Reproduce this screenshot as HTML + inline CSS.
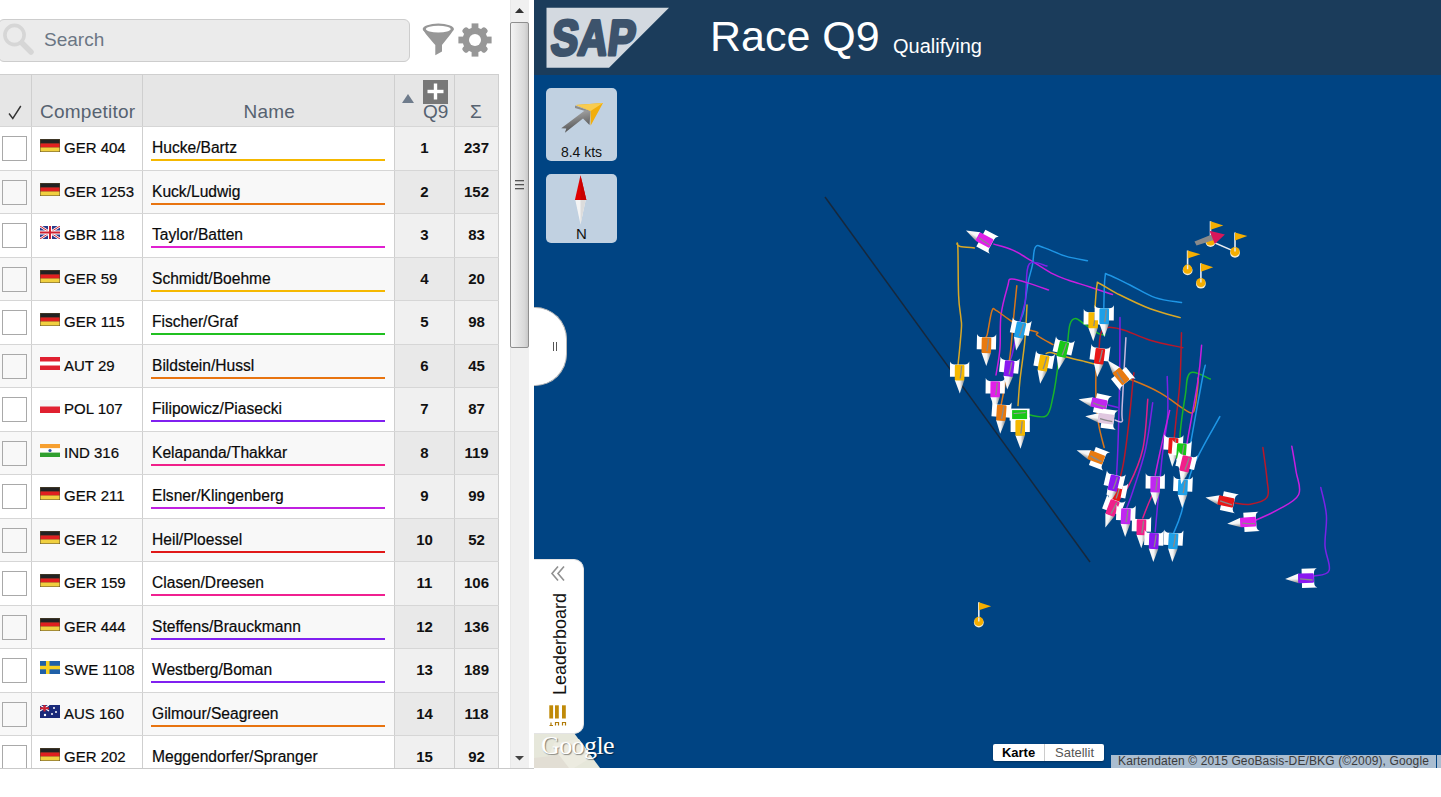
<!DOCTYPE html>
<html><head><meta charset="utf-8">
<style>
*{box-sizing:border-box;margin:0;padding:0}
html,body{width:1441px;height:797px;overflow:hidden;background:#fff;font-family:"Liberation Sans",sans-serif;position:relative}
.abs{position:absolute}
#search{left:-2px;top:19px;width:412px;height:43px;background:#ebebeb;border:1px solid #cdcdcd;border-radius:6px}
#search .ph{position:absolute;left:45px;top:9px;font-size:19px;color:#6b7684}
#tbl{position:absolute;left:0;top:74px;width:499px}
.hdr{position:absolute;left:0;top:0;width:499px;height:53px;background:#e6e6e6;border-top:1px solid #cfcfcf;border-bottom:1px solid #cfcfcf}
.vl{position:absolute;width:1px;background:#cfcfcf}
.row{position:absolute;left:0;width:499px;height:44px}
.hl{position:absolute;left:0;top:0;width:499px;height:1px;background:#d6d6d6}
.row.odd{background:#fff}
.row.even{background:#f8f8f8}
.row .sc{position:absolute;left:395px;top:0;width:104px;height:100%;background:#f0f0f0}
.row.even .sc{background:#e9e9e9}
.cb{position:absolute;left:2px;top:10px;width:25px;height:25px;border:1px solid #a9a9a9;background:#fff}
.row.even .cb{background:#f8f8f8}
.flag{position:absolute;left:40px;top:13px;width:20px;height:13px}
.cid{position:absolute;left:64px;top:12.5px;font-size:15px;color:#0a0a0a;-webkit-text-stroke:0.2px #0a0a0a}
.nm{position:absolute;left:152px;top:13.3px;font-size:15.6px;color:#0a0a0a;-webkit-text-stroke:0.2px #0a0a0a}
.ul{position:absolute;left:151px;top:33px;width:234px;height:2px}
.q{position:absolute;left:395px;width:59px;top:13px;text-align:center;font-size:15px;font-weight:bold;color:#111}
.s{position:absolute;left:455px;width:43px;top:13px;text-align:center;font-size:15px;font-weight:bold;color:#111}
.h{position:absolute;font-size:19px;color:#566270;top:26px;letter-spacing:0.25px}
#sb{position:absolute;left:510px;top:0;width:19px;height:768px;background:#f0f0f0;border-left:1px solid #e8e8e8}
#thumb{position:absolute;left:510px;top:22px;width:19px;height:326px;border:1px solid #8f8f8f;border-radius:2px;background:linear-gradient(to right,#f4f4f4 0%,#e6e6e6 40%,#d8d8d8 80%,#c8c8c8 100%)}
#bottomline{position:absolute;left:0;top:768px;width:534px;height:1px;background:#c9c9c9}
#map{position:absolute;left:534px;top:0;width:907px;height:768px;background:#004483;overflow:hidden}
#head{position:absolute;left:0;top:0;width:907px;height:75px;background:#1b3c5b}
</style></head><body>

<div id="search" class="abs">
  <svg class="abs" style="left:0;top:0" width="40" height="43" viewBox="0 0 40 43"><circle cx="15.5" cy="15" r="9.6" fill="none" stroke="#d6d6d6" stroke-width="3.6"/><line x1="23" y1="23" x2="32" y2="32" stroke="#d6d6d6" stroke-width="5.5" stroke-linecap="round"/></svg>
  <div class="ph">Search</div>
</div>
<!-- filter -->
<svg class="abs" style="left:420px;top:20px" width="38" height="40" viewBox="0 0 38 40">
  <ellipse cx="18.3" cy="8.9" rx="15.6" ry="5.3" fill="#979797"/>
  <path d="M2.9,9.5 C6,15 12,21 15.3,25 L15.3,35.3 L22,31.4 L22,25 C25,21 30.5,15 33.7,9.5 Z" fill="#979797"/>
  <ellipse cx="18.3" cy="9.1" rx="12.4" ry="3.4" fill="#fff"/>
</svg>
<!-- gear -->
<svg class="abs" style="left:456.5px;top:22.2px" width="36" height="36" viewBox="-18 -18 36 36">
  <g fill="#979797">
   <circle r="12.5"/>
   <rect x="-3.4" y="-16.6" width="6.8" height="33.2"/>
   <rect x="-16.6" y="-3.4" width="33.2" height="6.8"/>
   <rect x="-3.4" y="-16" width="6.8" height="32" rx="2.5" transform="rotate(45)"/>
   <rect x="-16" y="-3.4" width="32" height="6.8" rx="2.5" transform="rotate(45)"/>
  </g>
  <circle r="6" fill="#fff"/>
</svg>

<div id="tbl">
  <div class="hdr">
    <div class="vl" style="left:31px;top:0;height:52px"></div><div class="vl" style="left:142px;top:0;height:52px"></div><div class="vl" style="left:394px;top:0;height:52px"></div><div class="vl" style="left:454px;top:0;height:52px"></div><div class="vl" style="left:498px;top:0;height:52px"></div>
    <svg class="abs" style="left:8px;top:30px" width="14" height="15" viewBox="0 0 14 15"><path d="M1,8.5 L4.8,13.5 L12.8,1" fill="none" stroke="#333" stroke-width="1.4"/></svg>
    <div class="h" style="left:40px">Competitor</div>
    <div class="h" style="left:243.5px">Name</div>
    <div class="abs" style="left:402px;top:19px;width:0;height:0;border-left:6.5px solid transparent;border-right:6.5px solid transparent;border-bottom:9px solid #6f7c8c"></div>
    <div class="abs" style="left:423px;top:5px;width:25px;height:23.5px;background:#777"><svg width="25" height="24"><rect x="4.5" y="9.8" width="16" height="3.4" fill="#fff"/><rect x="10.8" y="3.5" width="3.4" height="16" fill="#fff"/></svg></div>
    <div class="h" style="left:423px;top:25.5px;letter-spacing:0">Q9</div>
    <div class="h" style="left:470px">&Sigma;</div>
  </div>
  </div>
<div class="abs" style="left:0;top:0;width:500px;height:768px;overflow:hidden"><div class="row odd" style="top:126px;height:44px"><div class="sc"></div><div class="cb"></div><svg class="flag" viewBox="0 0 20 13"><rect width="20" height="13" fill="#5a4a2a"/><rect x="0.5" y="0.5" width="19" height="4" fill="#222"/><rect x="0.5" y="4.5" width="19" height="4" fill="#e02020"/><rect x="0.5" y="8.5" width="19" height="4" fill="#f0d040"/></svg><div class="cid">GER 404</div><div class="nm">Hucke/Bartz</div><div class="ul" style="background:#f5b800"></div><div class="q">1</div><div class="s">237</div><div class="vl" style="left:31px;top:0;height:100%"></div><div class="vl" style="left:142px;top:0;height:100%"></div><div class="vl" style="left:394px;top:0;height:100%"></div><div class="vl" style="left:454px;top:0;height:100%"></div><div class="vl" style="left:498px;top:0;height:100%"></div><div class="hl"></div></div>
<div class="row even" style="top:170px;height:43px"><div class="sc"></div><div class="cb"></div><svg class="flag" viewBox="0 0 20 13"><rect width="20" height="13" fill="#5a4a2a"/><rect x="0.5" y="0.5" width="19" height="4" fill="#222"/><rect x="0.5" y="4.5" width="19" height="4" fill="#e02020"/><rect x="0.5" y="8.5" width="19" height="4" fill="#f0d040"/></svg><div class="cid">GER 1253</div><div class="nm">Kuck/Ludwig</div><div class="ul" style="background:#e87410"></div><div class="q">2</div><div class="s">152</div><div class="vl" style="left:31px;top:0;height:100%"></div><div class="vl" style="left:142px;top:0;height:100%"></div><div class="vl" style="left:394px;top:0;height:100%"></div><div class="vl" style="left:454px;top:0;height:100%"></div><div class="vl" style="left:498px;top:0;height:100%"></div><div class="hl"></div></div>
<div class="row odd" style="top:213px;height:44px"><div class="sc"></div><div class="cb"></div><svg class="flag" viewBox="0 0 20 13"><rect width="20" height="13" fill="#2a3a8a"/><path d="M0 0L20 13M20 0L0 13" stroke="#fff" stroke-width="2.5"/><path d="M0 0L20 13M20 0L0 13" stroke="#d02030" stroke-width="1"/><rect x="8" y="0" width="4" height="13" fill="#fff"/><rect x="0" y="4.5" width="20" height="4" fill="#fff"/><rect x="9" y="0" width="2" height="13" fill="#d02030"/><rect x="0" y="5.5" width="20" height="2" fill="#d02030"/></svg><div class="cid">GBR 118</div><div class="nm">Taylor/Batten</div><div class="ul" style="background:#e020d0"></div><div class="q">3</div><div class="s">83</div><div class="vl" style="left:31px;top:0;height:100%"></div><div class="vl" style="left:142px;top:0;height:100%"></div><div class="vl" style="left:394px;top:0;height:100%"></div><div class="vl" style="left:454px;top:0;height:100%"></div><div class="vl" style="left:498px;top:0;height:100%"></div><div class="hl"></div></div>
<div class="row even" style="top:257px;height:43px"><div class="sc"></div><div class="cb"></div><svg class="flag" viewBox="0 0 20 13"><rect width="20" height="13" fill="#5a4a2a"/><rect x="0.5" y="0.5" width="19" height="4" fill="#222"/><rect x="0.5" y="4.5" width="19" height="4" fill="#e02020"/><rect x="0.5" y="8.5" width="19" height="4" fill="#f0d040"/></svg><div class="cid">GER 59</div><div class="nm">Schmidt/Boehme</div><div class="ul" style="background:#f5b800"></div><div class="q">4</div><div class="s">20</div><div class="vl" style="left:31px;top:0;height:100%"></div><div class="vl" style="left:142px;top:0;height:100%"></div><div class="vl" style="left:394px;top:0;height:100%"></div><div class="vl" style="left:454px;top:0;height:100%"></div><div class="vl" style="left:498px;top:0;height:100%"></div><div class="hl"></div></div>
<div class="row odd" style="top:300px;height:44px"><div class="sc"></div><div class="cb"></div><svg class="flag" viewBox="0 0 20 13"><rect width="20" height="13" fill="#5a4a2a"/><rect x="0.5" y="0.5" width="19" height="4" fill="#222"/><rect x="0.5" y="4.5" width="19" height="4" fill="#e02020"/><rect x="0.5" y="8.5" width="19" height="4" fill="#f0d040"/></svg><div class="cid">GER 115</div><div class="nm">Fischer/Graf</div><div class="ul" style="background:#20c020"></div><div class="q">5</div><div class="s">98</div><div class="vl" style="left:31px;top:0;height:100%"></div><div class="vl" style="left:142px;top:0;height:100%"></div><div class="vl" style="left:394px;top:0;height:100%"></div><div class="vl" style="left:454px;top:0;height:100%"></div><div class="vl" style="left:498px;top:0;height:100%"></div><div class="hl"></div></div>
<div class="row even" style="top:344px;height:43px"><div class="sc"></div><div class="cb"></div><svg class="flag" viewBox="0 0 20 13"><rect width="20" height="13" fill="#e02030"/><rect x="0" y="4.5" width="20" height="4" fill="#fff"/></svg><div class="cid">AUT 29</div><div class="nm">Bildstein/Hussl</div><div class="ul" style="background:#e87410"></div><div class="q">6</div><div class="s">45</div><div class="vl" style="left:31px;top:0;height:100%"></div><div class="vl" style="left:142px;top:0;height:100%"></div><div class="vl" style="left:394px;top:0;height:100%"></div><div class="vl" style="left:454px;top:0;height:100%"></div><div class="vl" style="left:498px;top:0;height:100%"></div><div class="hl"></div></div>
<div class="row odd" style="top:387px;height:44px"><div class="sc"></div><div class="cb"></div><svg class="flag" viewBox="0 0 20 13"><rect width="20" height="13" fill="#e02030"/><rect x="0" y="0" width="20" height="6.5" fill="#f4f4f4"/></svg><div class="cid">POL 107</div><div class="nm">Filipowicz/Piasecki</div><div class="ul" style="background:#8020f0"></div><div class="q">7</div><div class="s">87</div><div class="vl" style="left:31px;top:0;height:100%"></div><div class="vl" style="left:142px;top:0;height:100%"></div><div class="vl" style="left:394px;top:0;height:100%"></div><div class="vl" style="left:454px;top:0;height:100%"></div><div class="vl" style="left:498px;top:0;height:100%"></div><div class="hl"></div></div>
<div class="row even" style="top:431px;height:43px"><div class="sc"></div><div class="cb"></div><svg class="flag" viewBox="0 0 20 13"><rect width="20" height="4.4" fill="#f7a030"/><rect y="4.3" width="20" height="4.4" fill="#fff"/><rect y="8.6" width="20" height="4.4" fill="#30a030"/><circle cx="10" cy="6.5" r="1.6" fill="#3050a0"/></svg><div class="cid">IND 316</div><div class="nm">Kelapanda/Thakkar</div><div class="ul" style="background:#f0208a"></div><div class="q">8</div><div class="s">119</div><div class="vl" style="left:31px;top:0;height:100%"></div><div class="vl" style="left:142px;top:0;height:100%"></div><div class="vl" style="left:394px;top:0;height:100%"></div><div class="vl" style="left:454px;top:0;height:100%"></div><div class="vl" style="left:498px;top:0;height:100%"></div><div class="hl"></div></div>
<div class="row odd" style="top:474px;height:44px"><div class="sc"></div><div class="cb"></div><svg class="flag" viewBox="0 0 20 13"><rect width="20" height="13" fill="#5a4a2a"/><rect x="0.5" y="0.5" width="19" height="4" fill="#222"/><rect x="0.5" y="4.5" width="19" height="4" fill="#e02020"/><rect x="0.5" y="8.5" width="19" height="4" fill="#f0d040"/></svg><div class="cid">GER 211</div><div class="nm">Elsner/Klingenberg</div><div class="ul" style="background:#c020e0"></div><div class="q">9</div><div class="s">99</div><div class="vl" style="left:31px;top:0;height:100%"></div><div class="vl" style="left:142px;top:0;height:100%"></div><div class="vl" style="left:394px;top:0;height:100%"></div><div class="vl" style="left:454px;top:0;height:100%"></div><div class="vl" style="left:498px;top:0;height:100%"></div><div class="hl"></div></div>
<div class="row even" style="top:518px;height:43px"><div class="sc"></div><div class="cb"></div><svg class="flag" viewBox="0 0 20 13"><rect width="20" height="13" fill="#5a4a2a"/><rect x="0.5" y="0.5" width="19" height="4" fill="#222"/><rect x="0.5" y="4.5" width="19" height="4" fill="#e02020"/><rect x="0.5" y="8.5" width="19" height="4" fill="#f0d040"/></svg><div class="cid">GER 12</div><div class="nm">Heil/Ploessel</div><div class="ul" style="background:#e01818"></div><div class="q">10</div><div class="s">52</div><div class="vl" style="left:31px;top:0;height:100%"></div><div class="vl" style="left:142px;top:0;height:100%"></div><div class="vl" style="left:394px;top:0;height:100%"></div><div class="vl" style="left:454px;top:0;height:100%"></div><div class="vl" style="left:498px;top:0;height:100%"></div><div class="hl"></div></div>
<div class="row odd" style="top:561px;height:44px"><div class="sc"></div><div class="cb"></div><svg class="flag" viewBox="0 0 20 13"><rect width="20" height="13" fill="#5a4a2a"/><rect x="0.5" y="0.5" width="19" height="4" fill="#222"/><rect x="0.5" y="4.5" width="19" height="4" fill="#e02020"/><rect x="0.5" y="8.5" width="19" height="4" fill="#f0d040"/></svg><div class="cid">GER 159</div><div class="nm">Clasen/Dreesen</div><div class="ul" style="background:#f02090"></div><div class="q">11</div><div class="s">106</div><div class="vl" style="left:31px;top:0;height:100%"></div><div class="vl" style="left:142px;top:0;height:100%"></div><div class="vl" style="left:394px;top:0;height:100%"></div><div class="vl" style="left:454px;top:0;height:100%"></div><div class="vl" style="left:498px;top:0;height:100%"></div><div class="hl"></div></div>
<div class="row even" style="top:605px;height:43px"><div class="sc"></div><div class="cb"></div><svg class="flag" viewBox="0 0 20 13"><rect width="20" height="13" fill="#5a4a2a"/><rect x="0.5" y="0.5" width="19" height="4" fill="#222"/><rect x="0.5" y="4.5" width="19" height="4" fill="#e02020"/><rect x="0.5" y="8.5" width="19" height="4" fill="#f0d040"/></svg><div class="cid">GER 444</div><div class="nm">Steffens/Brauckmann</div><div class="ul" style="background:#8020f0"></div><div class="q">12</div><div class="s">136</div><div class="vl" style="left:31px;top:0;height:100%"></div><div class="vl" style="left:142px;top:0;height:100%"></div><div class="vl" style="left:394px;top:0;height:100%"></div><div class="vl" style="left:454px;top:0;height:100%"></div><div class="vl" style="left:498px;top:0;height:100%"></div><div class="hl"></div></div>
<div class="row odd" style="top:648px;height:44px"><div class="sc"></div><div class="cb"></div><svg class="flag" viewBox="0 0 20 13"><rect width="20" height="13" fill="#2060a8"/><rect x="6" width="3.5" height="13" fill="#f8d020"/><rect y="4.8" width="20" height="3.5" fill="#f8d020"/></svg><div class="cid">SWE 1108</div><div class="nm">Westberg/Boman</div><div class="ul" style="background:#8020f0"></div><div class="q">13</div><div class="s">189</div><div class="vl" style="left:31px;top:0;height:100%"></div><div class="vl" style="left:142px;top:0;height:100%"></div><div class="vl" style="left:394px;top:0;height:100%"></div><div class="vl" style="left:454px;top:0;height:100%"></div><div class="vl" style="left:498px;top:0;height:100%"></div><div class="hl"></div></div>
<div class="row even" style="top:692px;height:43px"><div class="sc"></div><div class="cb"></div><svg class="flag" viewBox="0 0 20 13"><rect width="20" height="13" fill="#1a2a7a"/><path d="M0 0L9 6M9 0L0 6" stroke="#fff" stroke-width="1.3"/><rect x="3.5" y="0" width="2" height="6.5" fill="#d02030"/><rect x="0" y="2.3" width="9" height="2" fill="#d02030"/><circle cx="14" cy="3" r="1" fill="#fff"/><circle cx="16" cy="7" r="1" fill="#fff"/><circle cx="12" cy="9" r="1" fill="#fff"/><circle cx="5" cy="10" r="1.2" fill="#fff"/></svg><div class="cid">AUS 160</div><div class="nm">Gilmour/Seagreen</div><div class="ul" style="background:#e87410"></div><div class="q">14</div><div class="s">118</div><div class="vl" style="left:31px;top:0;height:100%"></div><div class="vl" style="left:142px;top:0;height:100%"></div><div class="vl" style="left:394px;top:0;height:100%"></div><div class="vl" style="left:454px;top:0;height:100%"></div><div class="vl" style="left:498px;top:0;height:100%"></div><div class="hl"></div></div>
<div class="row odd" style="top:735px;height:33px"><div class="sc"></div><div class="cb"></div><svg class="flag" viewBox="0 0 20 13"><rect width="20" height="13" fill="#5a4a2a"/><rect x="0.5" y="0.5" width="19" height="4" fill="#222"/><rect x="0.5" y="4.5" width="19" height="4" fill="#e02020"/><rect x="0.5" y="8.5" width="19" height="4" fill="#f0d040"/></svg><div class="cid">GER 202</div><div class="nm">Meggendorfer/Spranger</div><div class="q">15</div><div class="s">92</div><div class="vl" style="left:31px;top:0;height:100%"></div><div class="vl" style="left:142px;top:0;height:100%"></div><div class="vl" style="left:394px;top:0;height:100%"></div><div class="vl" style="left:454px;top:0;height:100%"></div><div class="vl" style="left:498px;top:0;height:100%"></div><div class="hl"></div></div>
</div>
<div id="sb"></div>
<div id="thumb"></div>
<svg class="abs" style="left:510px;top:178px" width="19" height="14"><rect x="5" y="2" width="9" height="1.3" fill="#555"/><rect x="5" y="6" width="9" height="1.3" fill="#555"/><rect x="5" y="10" width="9" height="1.3" fill="#555"/></svg>
<svg class="abs" style="left:510px;top:0" width="19" height="20"><polygon points="5,13 9.5,8 14,13" fill="#333"/></svg>
<svg class="abs" style="left:510px;top:748px" width="19" height="20"><polygon points="5,8 14,8 9.5,12.5" fill="#444"/></svg>
<div id="bottomline"></div>

<div id="map">
  <div id="head">
    <svg class="abs" style="left:12px;top:7px" width="124" height="62" viewBox="0 0 124 62">
      <polygon points="0.5,0.8 123,0.8 63,60.8 0.5,60.8" fill="#d3d9e0"/>
      <text x="0" y="0" transform="translate(3.5,48) skewX(-7)" font-family="Liberation Sans" font-weight="bold" font-size="50" fill="#3d536c" stroke="#3d536c" stroke-width="3.2" stroke-linejoin="round" textLength="84" lengthAdjust="spacingAndGlyphs">SAP</text>
    </svg>
    <div class="abs" style="left:176px;top:12px;font-size:43px;color:#fff;white-space:nowrap">Race Q9</div>
    <div class="abs" style="left:359px;top:34.5px;font-size:20px;color:#fff;white-space:nowrap">Qualifying</div>
  </div>
  <!-- speed widget -->
  <div class="abs" style="left:12px;top:88px;width:71px;height:73px;background:#c1d1e1;border-radius:5px">
    <svg class="abs" style="left:0;top:0" width="71" height="50" viewBox="0 0 71 50">
      <defs><linearGradient id="shaftx" x1="0" y1="0" x2="1" y2="0"><stop offset="0" stop-color="#909090"/><stop offset="1" stop-color="#404040"/></linearGradient>
      <linearGradient id="headg" x1="0" y1="0" x2="0" y2="1"><stop offset="0" stop-color="#ffe070"/><stop offset="1" stop-color="#e0a000"/></linearGradient></defs>
      <linearGradient id="sh2" x1="0" y1="0" x2="0.3" y2="1"><stop offset="0" stop-color="#b4b4b4"/><stop offset="1" stop-color="#505050"/></linearGradient>
      <polygon points="15.2,40.3 38.4,22.8 44.6,23.1 43.5,37 37,30.5 18.9,44.8 20.3,40.6" fill="url(#sh2)"/>
      <polygon points="29,17.5 44.6,23.1 38.4,22.8 29,20" fill="#8c8c8c"/>
      <polygon points="57,14.9 29.9,16.9 44.6,23.1 44.6,37.8" fill="#f2ae0c"/>
      <polygon points="57,14.9 29.9,16.9 44.6,23.1" fill="#f8cc50"/>
    </svg>
    <div class="abs" style="left:0;top:56px;width:71px;text-align:center;font-size:14px;color:#111">8.4 kts</div>
  </div>
  <!-- compass -->
  <div class="abs" style="left:12px;top:174px;width:71px;height:69px;background:#c1d1e1;border-radius:5px">
    <svg class="abs" style="left:0;top:0" width="71" height="52" viewBox="0 0 71 52">
      <polygon points="34.5,1.2 28.9,26 40.4,26" fill="#e00000"/><polygon points="34.5,1.2 34.5,26 40.4,26" fill="#c80000"/>
      <polygon points="29.3,26 39.7,26 34.5,50.6" fill="#f4f4f4"/>
      <polygon points="34.5,26 39.7,26 34.5,50.6" fill="#dcdcdc"/>
    </svg>
    <div class="abs" style="left:0;top:51px;width:71px;text-align:center;font-size:15px;color:#111">N</div>
  </div>
  <!-- collapse handle -->
  <div class="abs" style="left:-2px;top:307px;width:35px;height:79px;background:#fff;border:1px solid #b9b9b9;border-left:none;border-radius:0 32px 32px 0"></div>
  <div class="abs" style="left:19px;top:342px;width:1px;height:9px;background:#555"></div>
  <div class="abs" style="left:22px;top:342px;width:1px;height:9px;background:#555"></div>
  <svg class="abs" style="left:0;top:0" width="907" height="768" viewBox="534 0 907 768">
<defs><linearGradient id="bow" x1="0" y1="0" x2="1" y2="0"><stop offset="0" stop-color="#fff"/><stop offset="0.55" stop-color="#f4f4f4"/><stop offset="1" stop-color="#888"/></linearGradient></defs>
<line x1="825" y1="197" x2="1090" y2="562" stroke="#16283c" stroke-width="1.5"/>
<path d="M974.4,247.9 C971.8,247.6 963.2,247.1 960.1,246.4 C957.0,245.7 957.5,243.7 957.1,244.1 C956.7,244.5 957.6,239.4 957.9,248.6 C958.2,257.8 958.1,282.8 958.6,295.3 C959.1,307.8 960.4,312.3 960.9,317.9 C961.4,323.5 961.7,321.6 961.5,326.5 C961.3,331.4 960.6,338.1 960.0,345.0 C959.4,351.9 958.4,361.4 958.0,365.0" fill="none" stroke="#d9a826" stroke-width="1.5" stroke-linejoin="round" stroke-linecap="round"/>
<path d="M994.0,244.1 C997.4,245.2 1005.9,247.0 1012.8,250.1 C1019.7,253.2 1025.1,257.1 1032.4,261.4 C1039.7,265.7 1047.0,270.8 1053.5,274.2 C1060.0,277.6 1062.0,277.9 1068.6,280.2 C1075.2,282.5 1082.1,284.4 1090.0,287.0 C1097.9,289.6 1108.5,293.1 1112.5,294.5" fill="none" stroke="#c81ee0" stroke-width="1.5" stroke-linejoin="round" stroke-linecap="round"/>
<path d="M1087.4,260.7 C1083.5,259.9 1073.2,258.4 1065.5,256.1 C1057.8,253.8 1049.9,249.5 1044.5,247.9 C1039.1,246.3 1037.6,244.0 1035.4,247.1 C1033.2,250.2 1033.8,258.7 1032.4,265.2 C1031.1,271.7 1029.4,275.2 1027.9,283.3 C1026.4,291.4 1025.3,303.4 1024.0,310.0 C1022.6,316.6 1021.0,318.2 1020.4,320.0" fill="none" stroke="#1e96e6" stroke-width="1.5" stroke-linejoin="round" stroke-linecap="round"/>
<path d="M1047.0,266.0 C1043.8,265.6 1033.2,259.4 1029.4,263.7 C1025.6,268.0 1026.8,282.8 1026.0,290.0 C1025.2,297.2 1026.4,296.1 1024.7,303.9 C1023.0,311.7 1019.1,324.1 1016.8,333.3 C1014.5,342.5 1013.4,349.8 1012.0,355.0 C1010.6,360.2 1009.5,360.7 1009.0,362.0" fill="none" stroke="#7a22e6" stroke-width="1.5" stroke-linejoin="round" stroke-linecap="round"/>
<path d="M1048.5,289.9 C1044.4,288.5 1032.6,284.4 1025.9,282.4 C1019.2,280.4 1014.5,278.4 1011.2,279.0 C1007.9,279.6 1009.6,279.3 1007.8,285.8 C1006.0,292.3 1002.4,303.8 1001.0,315.2 C999.6,326.6 1000.8,338.3 999.9,349.1 C999.0,359.9 996.7,370.3 996.0,375.0" fill="none" stroke="#c81ee0" stroke-width="1.5" stroke-linejoin="round" stroke-linecap="round"/>
<path d="M1016.8,285.8 C1016.2,291.9 1014.6,307.1 1013.4,319.7 C1012.2,332.3 1011.7,343.2 1010.0,355.9 C1008.3,368.6 1005.6,381.1 1004.0,390.0 C1002.4,398.9 1001.5,402.8 1001.0,405.6" fill="none" stroke="#d9761a" stroke-width="1.5" stroke-linejoin="round" stroke-linecap="round"/>
<path d="M986.0,337.0 C986.3,336.3 986.4,338.0 987.5,333.3 C988.6,328.6 990.4,314.8 992.0,310.7 C993.6,306.6 993.7,309.3 996.5,310.7 C999.3,312.1 1003.3,315.6 1007.8,318.6 C1012.3,321.6 1016.1,325.2 1021.4,327.6 C1026.7,330.0 1034.4,330.7 1037.2,332.1 C1040.0,333.5 1034.4,333.2 1037.2,335.5 C1040.0,337.8 1050.2,343.0 1053.0,344.6" fill="none" stroke="#d9761a" stroke-width="1.5" stroke-linejoin="round" stroke-linecap="round"/>
<path d="M1027.0,305.0 C1026.6,311.7 1026.0,328.8 1024.7,342.3 C1023.4,355.8 1021.2,368.6 1020.0,380.0 C1018.8,391.4 1018.4,401.0 1018.0,405.6" fill="none" stroke="#d9a826" stroke-width="1.5" stroke-linejoin="round" stroke-linecap="round"/>
<path d="M1028.0,414.6 C1031.3,414.8 1041.7,419.0 1046.2,415.8 C1050.7,412.6 1051.0,405.0 1053.0,396.6 C1055.0,388.2 1056.2,377.8 1057.5,369.4 C1058.8,361.0 1059.5,353.5 1060.0,350.0" fill="none" stroke="#18b42a" stroke-width="1.5" stroke-linejoin="round" stroke-linecap="round"/>
<path d="M1067.7,342.3 C1068.1,339.0 1068.6,328.5 1070.0,324.2 C1071.4,319.9 1073.0,318.6 1075.6,318.6 C1078.2,318.6 1080.5,321.6 1084.6,324.2 C1088.7,326.8 1094.5,331.4 1098.2,333.3 C1101.9,335.2 1103.8,334.7 1105.0,335.0" fill="none" stroke="#18b42a" stroke-width="1.5" stroke-linejoin="round" stroke-linecap="round"/>
<path d="M1046.2,353.6 C1047.0,353.4 1047.0,351.9 1050.7,352.5 C1054.4,353.1 1060.5,355.4 1066.6,357.0 C1072.7,358.6 1078.9,360.1 1084.6,361.5 C1090.3,362.9 1095.8,364.3 1098.2,364.9" fill="none" stroke="#d9a826" stroke-width="1.5" stroke-linejoin="round" stroke-linecap="round"/>
<path d="M1103.8,307.6 C1104.0,302.2 1104.1,283.4 1105.0,277.5 C1105.9,271.6 1104.3,273.6 1108.8,275.0 C1113.3,276.4 1121.6,280.9 1130.0,285.0 C1138.4,289.1 1145.9,294.4 1155.2,297.6 C1164.5,300.8 1176.8,301.7 1181.5,302.6" fill="none" stroke="#1e96e6" stroke-width="1.5" stroke-linejoin="round" stroke-linecap="round"/>
<path d="M1095.0,307.6 C1095.4,303.5 1096.1,289.3 1097.0,285.0 C1097.9,280.7 1096.3,282.2 1100.0,283.8 C1103.7,285.4 1108.6,289.3 1117.6,293.8 C1126.6,298.3 1138.9,304.5 1150.2,308.8 C1161.5,313.1 1174.8,316.0 1180.2,317.6" fill="none" stroke="#d9a826" stroke-width="1.5" stroke-linejoin="round" stroke-linecap="round"/>
<path d="M1099.0,350.0 C1099.6,346.4 1098.8,333.8 1102.6,330.0 C1106.4,326.2 1111.4,327.1 1120.0,328.9 C1128.6,330.7 1138.9,336.8 1150.2,340.2 C1161.5,343.6 1176.9,346.3 1182.8,347.7" fill="none" stroke="#b8182a" stroke-width="1.5" stroke-linejoin="round" stroke-linecap="round"/>
<path d="M1181.5,332.7 C1181.2,341.2 1181.0,364.3 1180.0,380.0 C1179.0,395.7 1177.1,409.1 1176.0,420.0 C1174.9,430.9 1174.4,436.7 1174.0,440.4" fill="none" stroke="#b8182a" stroke-width="1.5" stroke-linejoin="round" stroke-linecap="round"/>
<path d="M1127.0,380.0 C1128.0,380.1 1126.6,378.0 1132.6,380.3 C1138.6,382.6 1151.6,388.1 1160.2,392.8 C1168.8,397.5 1174.6,403.0 1180.2,406.6 C1185.8,410.2 1188.8,413.1 1191.5,412.9 C1194.2,412.7 1194.2,410.3 1195.3,405.3 C1196.4,400.3 1197.3,390.2 1197.8,385.3 C1198.3,380.4 1198.0,379.3 1198.0,378.0" fill="none" stroke="#d9761a" stroke-width="1.5" stroke-linejoin="round" stroke-linecap="round"/>
<path d="M1181.4,440.7 C1181.2,439.3 1179.5,441.1 1180.2,432.9 C1180.9,424.7 1183.5,406.1 1185.3,395.3 C1187.1,384.5 1185.8,375.7 1190.3,372.8 C1194.8,369.9 1206.7,377.9 1210.3,379.0" fill="none" stroke="#18b42a" stroke-width="1.5" stroke-linejoin="round" stroke-linecap="round"/>
<path d="M1205.3,365.2 C1204.7,367.9 1204.7,366.4 1202.1,380.0 C1199.5,393.6 1194.1,423.3 1191.1,440.7 C1188.1,458.1 1186.6,470.1 1185.6,476.6" fill="none" stroke="#1e96e6" stroke-width="1.5" stroke-linejoin="round" stroke-linecap="round"/>
<path d="M1201.6,345.2 C1201.0,351.5 1200.6,362.3 1198.0,380.0 C1195.4,397.7 1189.3,429.5 1187.0,443.5 C1184.7,457.5 1185.4,455.4 1185.0,458.0" fill="none" stroke="#c81ee0" stroke-width="1.5" stroke-linejoin="round" stroke-linecap="round"/>
<path d="M1120.0,317.6 C1119.9,331.8 1119.9,368.5 1119.3,396.6 C1118.7,424.7 1117.6,459.1 1116.6,473.8 C1115.6,488.5 1114.5,477.2 1114.0,478.0" fill="none" stroke="#7a22e6" stroke-width="1.5" stroke-linejoin="round" stroke-linecap="round"/>
<path d="M1108.0,405.0 L1118.0,407.6" fill="none" stroke="#7a22e6" stroke-width="1.5" stroke-linejoin="round" stroke-linecap="round"/>
<path d="M1115.0,420.0 C1116.3,420.3 1120.8,423.6 1122.1,421.4 C1123.4,419.2 1121.4,422.7 1122.1,407.6 C1122.8,392.5 1125.2,350.3 1125.9,337.7" fill="none" stroke="#c8b8e0" stroke-width="1.5" stroke-linejoin="round" stroke-linecap="round"/>
<path d="M1133.9,372.8 C1133.8,374.1 1134.0,371.3 1133.1,380.0 C1132.2,388.7 1130.7,406.5 1129.0,421.4 C1127.3,436.3 1125.7,450.4 1123.5,462.8 C1121.3,475.2 1117.8,485.4 1116.6,490.4" fill="none" stroke="#b8182a" stroke-width="1.5" stroke-linejoin="round" stroke-linecap="round"/>
<path d="M1147.8,399.3 C1146.9,408.2 1146.2,433.6 1142.8,449.0 C1139.4,464.4 1134.0,475.0 1129.0,484.9 C1124.0,494.8 1117.7,500.7 1115.2,504.2" fill="none" stroke="#e0208a" stroke-width="1.5" stroke-linejoin="round" stroke-linecap="round"/>
<path d="M1152.7,402.8 C1151.4,411.1 1149.1,433.2 1145.6,449.0 C1142.1,464.8 1136.6,479.5 1133.1,490.4 C1129.6,501.3 1127.4,506.2 1126.2,509.7" fill="none" stroke="#7a22e6" stroke-width="1.5" stroke-linejoin="round" stroke-linecap="round"/>
<path d="M1167.2,376.5 C1167.3,383.6 1168.5,401.4 1167.6,415.9 C1166.7,430.4 1164.3,436.4 1162.1,457.3 C1159.9,478.2 1156.4,518.4 1155.2,531.8" fill="none" stroke="#7a22e6" stroke-width="1.5" stroke-linejoin="round" stroke-linecap="round"/>
<path d="M1169.7,410.4 C1168.1,417.3 1163.3,437.3 1160.7,449.0 C1158.1,460.7 1156.2,470.5 1155.2,475.2" fill="none" stroke="#c81ee0" stroke-width="1.5" stroke-linejoin="round" stroke-linecap="round"/>
<path d="M1157.0,486.0 C1155.7,488.5 1152.6,494.2 1150.0,500.0 C1147.4,505.8 1144.1,514.8 1142.8,518.0" fill="none" stroke="#e0208a" stroke-width="1.5" stroke-linejoin="round" stroke-linecap="round"/>
<path d="M1219.8,416.6 C1214.9,425.9 1199.4,451.0 1192.5,468.3 C1185.6,485.6 1184.9,500.6 1181.4,512.5 C1177.9,524.4 1174.5,530.6 1173.0,534.6" fill="none" stroke="#1e96e6" stroke-width="1.5" stroke-linejoin="round" stroke-linecap="round"/>
<path d="M1104.2,447.6 C1103.2,443.4 1100.1,433.4 1098.6,424.2 C1097.1,415.0 1096.5,406.5 1096.0,396.6 C1095.5,386.7 1096.0,374.0 1096.0,369.0" fill="none" stroke="#d9761a" stroke-width="1.5" stroke-linejoin="round" stroke-linecap="round"/>
<path d="M1235.0,503.0 C1237.8,503.2 1244.6,505.2 1250.4,504.2 C1256.2,503.2 1264.0,501.8 1267.0,497.3 C1270.0,492.8 1267.7,488.3 1267.0,479.4 C1266.3,470.5 1263.6,453.3 1262.9,447.6" fill="none" stroke="#b8182a" stroke-width="1.5" stroke-linejoin="round" stroke-linecap="round"/>
<path d="M1256.0,520.0 C1260.0,518.1 1270.3,514.3 1278.0,509.7 C1285.7,505.1 1295.5,501.5 1298.7,494.5 C1301.9,487.5 1297.2,479.7 1296.0,471.0 C1294.8,462.3 1292.6,450.7 1291.8,446.2" fill="none" stroke="#c81ee0" stroke-width="1.5" stroke-linejoin="round" stroke-linecap="round"/>
<path d="M1314.0,576.0 C1316.7,575.0 1327.1,575.9 1329.1,570.4 C1331.1,564.9 1325.5,555.5 1325.0,545.6 C1324.5,535.7 1327.2,525.6 1326.4,515.2 C1325.6,504.8 1321.8,492.6 1320.8,487.6" fill="none" stroke="#7a22e6" stroke-width="1.5" stroke-linejoin="round" stroke-linecap="round"/>
<g transform="translate(1019.6,414.6)"><rect x="-10" y="-6" width="20" height="12" fill="#fff"/><rect x="-7.5" y="-4.5" width="15" height="9" fill="#18c818"/><line x1="-6" y1="-1" x2="6" y2="-2" stroke="#999" stroke-width="1"/></g>
<g transform="translate(984.2,239.9) rotate(118.2)"><path d="M-9.6,-11.5 Q-8.5,-8.5 -5,-8.5 L5,-8.5 Q8.5,-8.5 9.6,-11.5 L9.6,3.8 L-9.6,3.8 Z" fill="#fff"/><path d="M-4.8,7 L4.8,7 L0.3,20.5 Z" fill="url(#bow)"/><rect x="-4.8" y="-8.3" width="9.6" height="15.8" rx="1.2" fill="#e020e8"/><path d="M2,-7 Q1.4,1 0.6,5.5" stroke="#8a8a8a" stroke-width="1.3" fill="none"/></g>
<g transform="translate(959.6,373.0) rotate(0.3)"><path d="M-9.6,-11.5 Q-8.5,-8.5 -5,-8.5 L5,-8.5 Q8.5,-8.5 9.6,-11.5 L9.6,3.8 L-9.6,3.8 Z" fill="#fff"/><path d="M-4.8,7 L4.8,7 L0.3,20.5 Z" fill="url(#bow)"/><rect x="-4.8" y="-8.3" width="9.6" height="15.8" rx="1.2" fill="#f5b800"/><path d="M2,-7 Q1.4,1 0.6,5.5" stroke="#8a8a8a" stroke-width="1.3" fill="none"/></g>
<g transform="translate(986.4,345.6) rotate(1.2)"><path d="M-9.6,-11.5 Q-8.5,-8.5 -5,-8.5 L5,-8.5 Q8.5,-8.5 9.6,-11.5 L9.6,3.8 L-9.6,3.8 Z" fill="#fff"/><path d="M-4.8,7 L4.8,7 L0.3,20.5 Z" fill="url(#bow)"/><rect x="-4.8" y="-8.3" width="9.6" height="15.8" rx="1.2" fill="#e87a10"/><path d="M2,-7 Q1.4,1 0.6,5.5" stroke="#8a8a8a" stroke-width="1.3" fill="none"/></g>
<g transform="translate(1020.0,330.4) rotate(11.7)"><path d="M-9.6,-11.5 Q-8.5,-8.5 -5,-8.5 L5,-8.5 Q8.5,-8.5 9.6,-11.5 L9.6,3.8 L-9.6,3.8 Z" fill="#fff"/><path d="M-4.8,7 L4.8,7 L0.3,20.5 Z" fill="url(#bow)"/><rect x="-4.8" y="-8.3" width="9.6" height="15.8" rx="1.2" fill="#1ea0e8"/><path d="M2,-7 Q1.4,1 0.6,5.5" stroke="#8a8a8a" stroke-width="1.3" fill="none"/></g>
<g transform="translate(1009.0,369.0) rotate(5.9)"><path d="M-9.6,-11.5 Q-8.5,-8.5 -5,-8.5 L5,-8.5 Q8.5,-8.5 9.6,-11.5 L9.6,3.8 L-9.6,3.8 Z" fill="#fff"/><path d="M-4.8,7 L4.8,7 L0.3,20.5 Z" fill="url(#bow)"/><rect x="-4.8" y="-8.3" width="9.6" height="15.8" rx="1.2" fill="#8a18f0"/><path d="M2,-7 Q1.4,1 0.6,5.5" stroke="#8a8a8a" stroke-width="1.3" fill="none"/></g>
<g transform="translate(995.2,389.7) rotate(0.6)"><path d="M-9.6,-11.5 Q-8.5,-8.5 -5,-8.5 L5,-8.5 Q8.5,-8.5 9.6,-11.5 L9.6,3.8 L-9.6,3.8 Z" fill="#fff"/><path d="M-4.8,7 L4.8,7 L0.3,20.5 Z" fill="url(#bow)"/><rect x="-4.8" y="-8.3" width="9.6" height="15.8" rx="1.2" fill="#e020e8"/><path d="M2,-7 Q1.4,1 0.6,5.5" stroke="#8a8a8a" stroke-width="1.3" fill="none"/></g>
<g transform="translate(1001.3,413.2) rotate(3.9)"><path d="M-9.6,-11.5 Q-8.5,-8.5 -5,-8.5 L5,-8.5 Q8.5,-8.5 9.6,-11.5 L9.6,3.8 L-9.6,3.8 Z" fill="#fff"/><path d="M-4.8,7 L4.8,7 L0.3,20.5 Z" fill="url(#bow)"/><rect x="-4.8" y="-8.3" width="9.6" height="15.8" rx="1.2" fill="#e87a10"/><path d="M2,-7 Q1.4,1 0.6,5.5" stroke="#8a8a8a" stroke-width="1.3" fill="none"/></g>
<g transform="translate(1020.2,428.2) rotate(-0.0)"><path d="M-9.6,-11.5 Q-8.5,-8.5 -5,-8.5 L5,-8.5 Q8.5,-8.5 9.6,-11.5 L9.6,3.8 L-9.6,3.8 Z" fill="#fff"/><path d="M-4.8,7 L4.8,7 L0.3,20.5 Z" fill="url(#bow)"/><rect x="-4.8" y="-8.3" width="9.6" height="15.8" rx="1.2" fill="#f5b800"/><path d="M2,-7 Q1.4,1 0.6,5.5" stroke="#8a8a8a" stroke-width="1.3" fill="none"/></g>
<g transform="translate(1043.5,363.5) rotate(10.3)"><path d="M-9.6,-11.5 Q-8.5,-8.5 -5,-8.5 L5,-8.5 Q8.5,-8.5 9.6,-11.5 L9.6,3.8 L-9.6,3.8 Z" fill="#fff"/><path d="M-4.8,7 L4.8,7 L0.3,20.5 Z" fill="url(#bow)"/><rect x="-4.8" y="-8.3" width="9.6" height="15.8" rx="1.2" fill="#f5b800"/><path d="M2,-7 Q1.4,1 0.6,5.5" stroke="#8a8a8a" stroke-width="1.3" fill="none"/></g>
<g transform="translate(1062.8,349.7) rotate(13.1)"><path d="M-9.6,-11.5 Q-8.5,-8.5 -5,-8.5 L5,-8.5 Q8.5,-8.5 9.6,-11.5 L9.6,3.8 L-9.6,3.8 Z" fill="#fff"/><path d="M-4.8,7 L4.8,7 L0.3,20.5 Z" fill="url(#bow)"/><rect x="-4.8" y="-8.3" width="9.6" height="15.8" rx="1.2" fill="#18c818"/><path d="M2,-7 Q1.4,1 0.6,5.5" stroke="#8a8a8a" stroke-width="1.3" fill="none"/></g>
<g transform="translate(1093.2,320.7) rotate(0.6)"><path d="M-9.6,-11.5 Q-8.5,-8.5 -5,-8.5 L5,-8.5 Q8.5,-8.5 9.6,-11.5 L9.6,3.8 L-9.6,3.8 Z" fill="#fff"/><path d="M-4.8,7 L4.8,7 L0.3,20.5 Z" fill="url(#bow)"/><rect x="-4.8" y="-8.3" width="9.6" height="15.8" rx="1.2" fill="#f5b800"/><path d="M2,-7 Q1.4,1 0.6,5.5" stroke="#8a8a8a" stroke-width="1.3" fill="none"/></g>
<g transform="translate(1104.2,316.6) rotate(0.6)"><path d="M-9.6,-11.5 Q-8.5,-8.5 -5,-8.5 L5,-8.5 Q8.5,-8.5 9.6,-11.5 L9.6,3.8 L-9.6,3.8 Z" fill="#fff"/><path d="M-4.8,7 L4.8,7 L0.3,20.5 Z" fill="url(#bow)"/><rect x="-4.8" y="-8.3" width="9.6" height="15.8" rx="1.2" fill="#1ea0e8"/><path d="M2,-7 Q1.4,1 0.6,5.5" stroke="#8a8a8a" stroke-width="1.3" fill="none"/></g>
<g transform="translate(1099.5,356.6) rotate(7.3)"><path d="M-9.6,-11.5 Q-8.5,-8.5 -5,-8.5 L5,-8.5 Q8.5,-8.5 9.6,-11.5 L9.6,3.8 L-9.6,3.8 Z" fill="#fff"/><path d="M-4.8,7 L4.8,7 L0.3,20.5 Z" fill="url(#bow)"/><rect x="-4.8" y="-8.3" width="9.6" height="15.8" rx="1.2" fill="#e81818"/><path d="M2,-7 Q1.4,1 0.6,5.5" stroke="#8a8a8a" stroke-width="1.3" fill="none"/></g>
<g transform="translate(1120.8,376.0) rotate(140.8)"><path d="M-9.6,-11.5 Q-8.5,-8.5 -5,-8.5 L5,-8.5 Q8.5,-8.5 9.6,-11.5 L9.6,3.8 L-9.6,3.8 Z" fill="#fff"/><path d="M-4.8,7 L4.8,7 L0.3,20.5 Z" fill="url(#bow)"/><rect x="-4.8" y="-8.3" width="9.6" height="15.8" rx="1.2" fill="#e87a10"/><path d="M2,-7 Q1.4,1 0.6,5.5" stroke="#8a8a8a" stroke-width="1.3" fill="none"/></g>
<g transform="translate(1098.7,403.5) rotate(102.5)"><path d="M-9.6,-11.5 Q-8.5,-8.5 -5,-8.5 L5,-8.5 Q8.5,-8.5 9.6,-11.5 L9.6,3.8 L-9.6,3.8 Z" fill="#fff"/><path d="M-4.8,7 L4.8,7 L0.3,20.5 Z" fill="url(#bow)"/><rect x="-4.8" y="-8.3" width="9.6" height="15.8" rx="1.2" fill="#c028f0"/><path d="M2,-7 Q1.4,1 0.6,5.5" stroke="#8a8a8a" stroke-width="1.3" fill="none"/></g>
<g transform="translate(1105.6,418.7) rotate(97.5)"><path d="M-9.6,-11.5 Q-8.5,-8.5 -5,-8.5 L5,-8.5 Q8.5,-8.5 9.6,-11.5 L9.6,3.8 L-9.6,3.8 Z" fill="#fff"/><path d="M-4.8,7 L4.8,7 L0.3,20.5 Z" fill="url(#bow)"/><rect x="-4.8" y="-8.3" width="9.6" height="15.8" rx="1.2" fill="#e0c8e0"/><path d="M2,-7 Q1.4,1 0.6,5.5" stroke="#8a8a8a" stroke-width="1.3" fill="none"/></g>
<g transform="translate(1095.9,457.3) rotate(111.1)"><path d="M-9.6,-11.5 Q-8.5,-8.5 -5,-8.5 L5,-8.5 Q8.5,-8.5 9.6,-11.5 L9.6,3.8 L-9.6,3.8 Z" fill="#fff"/><path d="M-4.8,7 L4.8,7 L0.3,20.5 Z" fill="url(#bow)"/><rect x="-4.8" y="-8.3" width="9.6" height="15.8" rx="1.2" fill="#e87a10"/><path d="M2,-7 Q1.4,1 0.6,5.5" stroke="#8a8a8a" stroke-width="1.3" fill="none"/></g>
<g transform="translate(1116.6,493.0) rotate(11.3)"><path d="M-9.6,-11.5 Q-8.5,-8.5 -5,-8.5 L5,-8.5 Q8.5,-8.5 9.6,-11.5 L9.6,3.8 L-9.6,3.8 Z" fill="#fff"/><path d="M-4.8,7 L4.8,7 L0.3,20.5 Z" fill="url(#bow)"/><rect x="-4.8" y="-8.3" width="9.6" height="15.8" rx="1.2" fill="#e81818"/><path d="M2,-7 Q1.4,1 0.6,5.5" stroke="#8a8a8a" stroke-width="1.3" fill="none"/></g>
<g transform="translate(1113.8,483.5) rotate(12.9)"><path d="M-9.6,-11.5 Q-8.5,-8.5 -5,-8.5 L5,-8.5 Q8.5,-8.5 9.6,-11.5 L9.6,3.8 L-9.6,3.8 Z" fill="#fff"/><path d="M-4.8,7 L4.8,7 L0.3,20.5 Z" fill="url(#bow)"/><rect x="-4.8" y="-8.3" width="9.6" height="15.8" rx="1.2" fill="#8a18f0"/><path d="M2,-7 Q1.4,1 0.6,5.5" stroke="#8a8a8a" stroke-width="1.3" fill="none"/></g>
<g transform="translate(1112.4,508.3) rotate(21.0)"><path d="M-9.6,-11.5 Q-8.5,-8.5 -5,-8.5 L5,-8.5 Q8.5,-8.5 9.6,-11.5 L9.6,3.8 L-9.6,3.8 Z" fill="#fff"/><path d="M-4.8,7 L4.8,7 L0.3,20.5 Z" fill="url(#bow)"/><rect x="-4.8" y="-8.3" width="9.6" height="15.8" rx="1.2" fill="#f0208a"/><path d="M2,-7 Q1.4,1 0.6,5.5" stroke="#8a8a8a" stroke-width="1.3" fill="none"/></g>
<g transform="translate(1125.7,516.6) rotate(2.4)"><path d="M-9.6,-11.5 Q-8.5,-8.5 -5,-8.5 L5,-8.5 Q8.5,-8.5 9.6,-11.5 L9.6,3.8 L-9.6,3.8 Z" fill="#fff"/><path d="M-4.8,7 L4.8,7 L0.3,20.5 Z" fill="url(#bow)"/><rect x="-4.8" y="-8.3" width="9.6" height="15.8" rx="1.2" fill="#c028f0"/><path d="M2,-7 Q1.4,1 0.6,5.5" stroke="#8a8a8a" stroke-width="1.3" fill="none"/></g>
<g transform="translate(1141.4,527.7) rotate(1.2)"><path d="M-9.6,-11.5 Q-8.5,-8.5 -5,-8.5 L5,-8.5 Q8.5,-8.5 9.6,-11.5 L9.6,3.8 L-9.6,3.8 Z" fill="#fff"/><path d="M-4.8,7 L4.8,7 L0.3,20.5 Z" fill="url(#bow)"/><rect x="-4.8" y="-8.3" width="9.6" height="15.8" rx="1.2" fill="#f0208a"/><path d="M2,-7 Q1.4,1 0.6,5.5" stroke="#8a8a8a" stroke-width="1.3" fill="none"/></g>
<g transform="translate(1153.8,541.5) rotate(2.2)"><path d="M-9.6,-11.5 Q-8.5,-8.5 -5,-8.5 L5,-8.5 Q8.5,-8.5 9.6,-11.5 L9.6,3.8 L-9.6,3.8 Z" fill="#fff"/><path d="M-4.8,7 L4.8,7 L0.3,20.5 Z" fill="url(#bow)"/><rect x="-4.8" y="-8.3" width="9.6" height="15.8" rx="1.2" fill="#8a18f0"/><path d="M2,-7 Q1.4,1 0.6,5.5" stroke="#8a8a8a" stroke-width="1.3" fill="none"/></g>
<g transform="translate(1173.2,541.5) rotate(3.3)"><path d="M-9.6,-11.5 Q-8.5,-8.5 -5,-8.5 L5,-8.5 Q8.5,-8.5 9.6,-11.5 L9.6,3.8 L-9.6,3.8 Z" fill="#fff"/><path d="M-4.8,7 L4.8,7 L0.3,20.5 Z" fill="url(#bow)"/><rect x="-4.8" y="-8.3" width="9.6" height="15.8" rx="1.2" fill="#1ea0e8"/><path d="M2,-7 Q1.4,1 0.6,5.5" stroke="#8a8a8a" stroke-width="1.3" fill="none"/></g>
<g transform="translate(1155.2,484.9) rotate(0.6)"><path d="M-9.6,-11.5 Q-8.5,-8.5 -5,-8.5 L5,-8.5 Q8.5,-8.5 9.6,-11.5 L9.6,3.8 L-9.6,3.8 Z" fill="#fff"/><path d="M-4.8,7 L4.8,7 L0.3,20.5 Z" fill="url(#bow)"/><rect x="-4.8" y="-8.3" width="9.6" height="15.8" rx="1.2" fill="#c028f0"/><path d="M2,-7 Q1.4,1 0.6,5.5" stroke="#8a8a8a" stroke-width="1.3" fill="none"/></g>
<g transform="translate(1182.8,487.6) rotate(2.4)"><path d="M-9.6,-11.5 Q-8.5,-8.5 -5,-8.5 L5,-8.5 Q8.5,-8.5 9.6,-11.5 L9.6,3.8 L-9.6,3.8 Z" fill="#fff"/><path d="M-4.8,7 L4.8,7 L0.3,20.5 Z" fill="url(#bow)"/><rect x="-4.8" y="-8.3" width="9.6" height="15.8" rx="1.2" fill="#1ea0e8"/><path d="M2,-7 Q1.4,1 0.6,5.5" stroke="#8a8a8a" stroke-width="1.3" fill="none"/></g>
<g transform="translate(1173.2,446.2) rotate(3.5)"><path d="M-9.6,-11.5 Q-8.5,-8.5 -5,-8.5 L5,-8.5 Q8.5,-8.5 9.6,-11.5 L9.6,3.8 L-9.6,3.8 Z" fill="#fff"/><path d="M-4.8,7 L4.8,7 L0.3,20.5 Z" fill="url(#bow)"/><rect x="-4.8" y="-8.3" width="9.6" height="15.8" rx="1.2" fill="#e81818"/><path d="M2,-7 Q1.4,1 0.6,5.5" stroke="#8a8a8a" stroke-width="1.3" fill="none"/></g>
<g transform="translate(1181.4,451.8) rotate(4.2)"><path d="M-9.6,-11.5 Q-8.5,-8.5 -5,-8.5 L5,-8.5 Q8.5,-8.5 9.6,-11.5 L9.6,3.8 L-9.6,3.8 Z" fill="#fff"/><path d="M-4.8,7 L4.8,7 L0.3,20.5 Z" fill="url(#bow)"/><rect x="-4.8" y="-8.3" width="9.6" height="15.8" rx="1.2" fill="#18c818"/><path d="M2,-7 Q1.4,1 0.6,5.5" stroke="#8a8a8a" stroke-width="1.3" fill="none"/></g>
<g transform="translate(1185.6,464.2) rotate(13.3)"><path d="M-9.6,-11.5 Q-8.5,-8.5 -5,-8.5 L5,-8.5 Q8.5,-8.5 9.6,-11.5 L9.6,3.8 L-9.6,3.8 Z" fill="#fff"/><path d="M-4.8,7 L4.8,7 L0.3,20.5 Z" fill="url(#bow)"/><rect x="-4.8" y="-8.3" width="9.6" height="15.8" rx="1.2" fill="#f0208a"/><path d="M2,-7 Q1.4,1 0.6,5.5" stroke="#8a8a8a" stroke-width="1.3" fill="none"/></g>
<g transform="translate(1225.6,501.4) rotate(102.0)"><path d="M-9.6,-11.5 Q-8.5,-8.5 -5,-8.5 L5,-8.5 Q8.5,-8.5 9.6,-11.5 L9.6,3.8 L-9.6,3.8 Z" fill="#fff"/><path d="M-4.8,7 L4.8,7 L0.3,20.5 Z" fill="url(#bow)"/><rect x="-4.8" y="-8.3" width="9.6" height="15.8" rx="1.2" fill="#e81818"/><path d="M2,-7 Q1.4,1 0.6,5.5" stroke="#8a8a8a" stroke-width="1.3" fill="none"/></g>
<g transform="translate(1247.7,522.1) rotate(86.1)"><path d="M-9.6,-11.5 Q-8.5,-8.5 -5,-8.5 L5,-8.5 Q8.5,-8.5 9.6,-11.5 L9.6,3.8 L-9.6,3.8 Z" fill="#fff"/><path d="M-4.8,7 L4.8,7 L0.3,20.5 Z" fill="url(#bow)"/><rect x="-4.8" y="-8.3" width="9.6" height="15.8" rx="1.2" fill="#e020e8"/><path d="M2,-7 Q1.4,1 0.6,5.5" stroke="#8a8a8a" stroke-width="1.3" fill="none"/></g>
<g transform="translate(1305.6,578.2) rotate(88.5)"><path d="M-9.6,-11.5 Q-8.5,-8.5 -5,-8.5 L5,-8.5 Q8.5,-8.5 9.6,-11.5 L9.6,3.8 L-9.6,3.8 Z" fill="#fff"/><path d="M-4.8,7 L4.8,7 L0.3,20.5 Z" fill="url(#bow)"/><rect x="-4.8" y="-8.3" width="9.6" height="15.8" rx="1.2" fill="#8a18f0"/><path d="M2,-7 Q1.4,1 0.6,5.5" stroke="#8a8a8a" stroke-width="1.3" fill="none"/></g>
<line x1="1210.5" y1="241" x2="1235" y2="251.6" stroke="#e8eef4" stroke-width="1.4"/>
<line x1="1210.5" y1="221.2" x2="1210.5" y2="240.9" stroke="#e8eef4" stroke-width="1.6"/><polygon points="1210.5,221.2 1223.3,225.5 1210.5,229.7" fill="#f5ae00"/><ellipse cx="1210.5" cy="242.1" rx="4.9" ry="4.9" fill="#f3ead0"/><circle cx="1210.5" cy="240.9" r="4.6" fill="#f5ae00"/><line x1="1210.5" y1="236.9" x2="1210.5" y2="240.9" stroke="#e8eef4" stroke-width="1.4"/>
<line x1="1235" y1="232.4" x2="1235" y2="251.6" stroke="#e8eef4" stroke-width="1.6"/><polygon points="1235,232.4 1247.3,236.1 1235,240.4" fill="#f5ae00"/><ellipse cx="1235" cy="252.79999999999998" rx="4.9" ry="4.9" fill="#f3ead0"/><circle cx="1235" cy="251.6" r="4.6" fill="#f5ae00"/><line x1="1235" y1="247.6" x2="1235" y2="251.6" stroke="#e8eef4" stroke-width="1.4"/>
<line x1="1187.6" y1="250.5" x2="1187.6" y2="269.2" stroke="#e8eef4" stroke-width="1.6"/><polygon points="1187.6,250.5 1200.4,254.3 1187.6,258.5" fill="#f5ae00"/><ellipse cx="1187.6" cy="270.4" rx="4.9" ry="4.9" fill="#f3ead0"/><circle cx="1187.6" cy="269.2" r="4.6" fill="#f5ae00"/><line x1="1187.6" y1="265.2" x2="1187.6" y2="269.2" stroke="#e8eef4" stroke-width="1.4"/>
<line x1="1200.9" y1="263.3" x2="1200.9" y2="282.5" stroke="#e8eef4" stroke-width="1.6"/><polygon points="1200.9,263.3 1213.2,267.3 1200.9,271.8" fill="#f5ae00"/><ellipse cx="1200.9" cy="283.7" rx="4.9" ry="4.9" fill="#f3ead0"/><circle cx="1200.9" cy="282.5" r="4.6" fill="#f5ae00"/><line x1="1200.9" y1="278.5" x2="1200.9" y2="282.5" stroke="#e8eef4" stroke-width="1.4"/>
<line x1="978.8" y1="602.3" x2="978.8" y2="621.4" stroke="#e8eef4" stroke-width="1.6"/><polygon points="978.8,602.3 991.1,606.3 978.8,610.3" fill="#f5ae00"/><ellipse cx="978.8" cy="622.6" rx="4.9" ry="4.9" fill="#f3ead0"/><circle cx="978.8" cy="621.4" r="4.6" fill="#f5ae00"/><line x1="978.8" y1="617.4" x2="978.8" y2="621.4" stroke="#e8eef4" stroke-width="1.4"/>
<polygon points="1194.5,241.5 1213,234 1215.5,239.5 1196.5,245.5" fill="#8a8a8a"/>
<polygon points="1209.5,230.8 1224.9,234.5 1214.8,244.1" fill="#d8185a"/>
</svg>
  <!-- google tile corner -->
  <svg class="abs" style="left:0;top:733px" width="90" height="35" viewBox="0 0 90 35"><polygon points="0,0 40,0 66,35 0,35" fill="#e6e7da"/><polygon points="20,10 45,6 58,24 40,35 10,35" fill="#ecebe0"/><polygon points="0,25 25,22 35,35 0,35" fill="#e2ded4"/></svg>
  <div class="abs" style="left:7px;top:731px;font-family:'Liberation Serif',serif;font-size:26px;line-height:30px;color:#fff;text-shadow:1px 1px 1px rgba(0,0,0,.45);letter-spacing:-0.6px">Google</div>
  <!-- leaderboard tab -->
  <div class="abs" style="left:-1px;top:559px;width:51px;height:175px;background:#fff;border-radius:0 10px 10px 0;border:1px solid #e4e4e4;border-left:none"></div>
  <svg class="abs" style="left:16px;top:565px" width="16" height="17" viewBox="0 0 16 17"><polyline points="8,1.5 2,8.5 8,15.5" fill="none" stroke="#909090" stroke-width="1.6"/><polyline points="14,1.5 8,8.5 14,15.5" fill="none" stroke="#909090" stroke-width="1.6"/></svg>
  <div class="abs" style="left:17px;top:695px;font-size:18px;color:#111;transform-origin:0 0;transform:rotate(-90deg);white-space:nowrap;line-height:18px">Leaderboard</div>
  <svg class="abs" style="left:14px;top:704px" width="22" height="23" viewBox="0 0 22 23"><rect x="1.3" y="1.3" width="3.8" height="13.2" fill="#c08a08"/><rect x="7" y="1.3" width="3.8" height="13.2" fill="#c08a08"/><rect x="14" y="1.3" width="3.8" height="13.2" fill="#c08a08"/><path d="M1.5,21.5h3.5M3,18.5v3M7.5,21.5v-3h3v3M14.5,21.5v-3h3v3" stroke="#b07a08" stroke-width="1.2" fill="none"/></svg>
  <!-- map type -->
  <div class="abs" style="left:459px;top:744px;width:111px;height:17px;background:#fff;border-radius:2px;box-shadow:0 1px 2px rgba(0,0,0,.3)">
    <div class="abs" style="left:0;top:0;width:51px;text-align:center;font-size:13px;font-weight:bold;color:#000;line-height:17px">Karte</div>
    <div class="abs" style="left:51px;top:0;width:1px;height:17px;background:#ccc"></div>
    <div class="abs" style="left:52px;top:0;width:59px;text-align:center;font-size:13px;color:#565656;line-height:17px">Satellit</div>
  </div>
  <div class="abs" style="left:577px;top:755px;width:325px;height:13px;background:#aabdd0;font-size:12px;letter-spacing:0.13px;color:#3a3a3a;line-height:13px;padding-left:7px;white-space:nowrap">Kartendaten &copy; 2015 GeoBasis-DE/BKG (&copy;2009), Google</div>
  <div class="abs" style="left:903px;top:755px;width:4px;height:13px;background:#aabdd0"></div>
</div>
</body></html>
